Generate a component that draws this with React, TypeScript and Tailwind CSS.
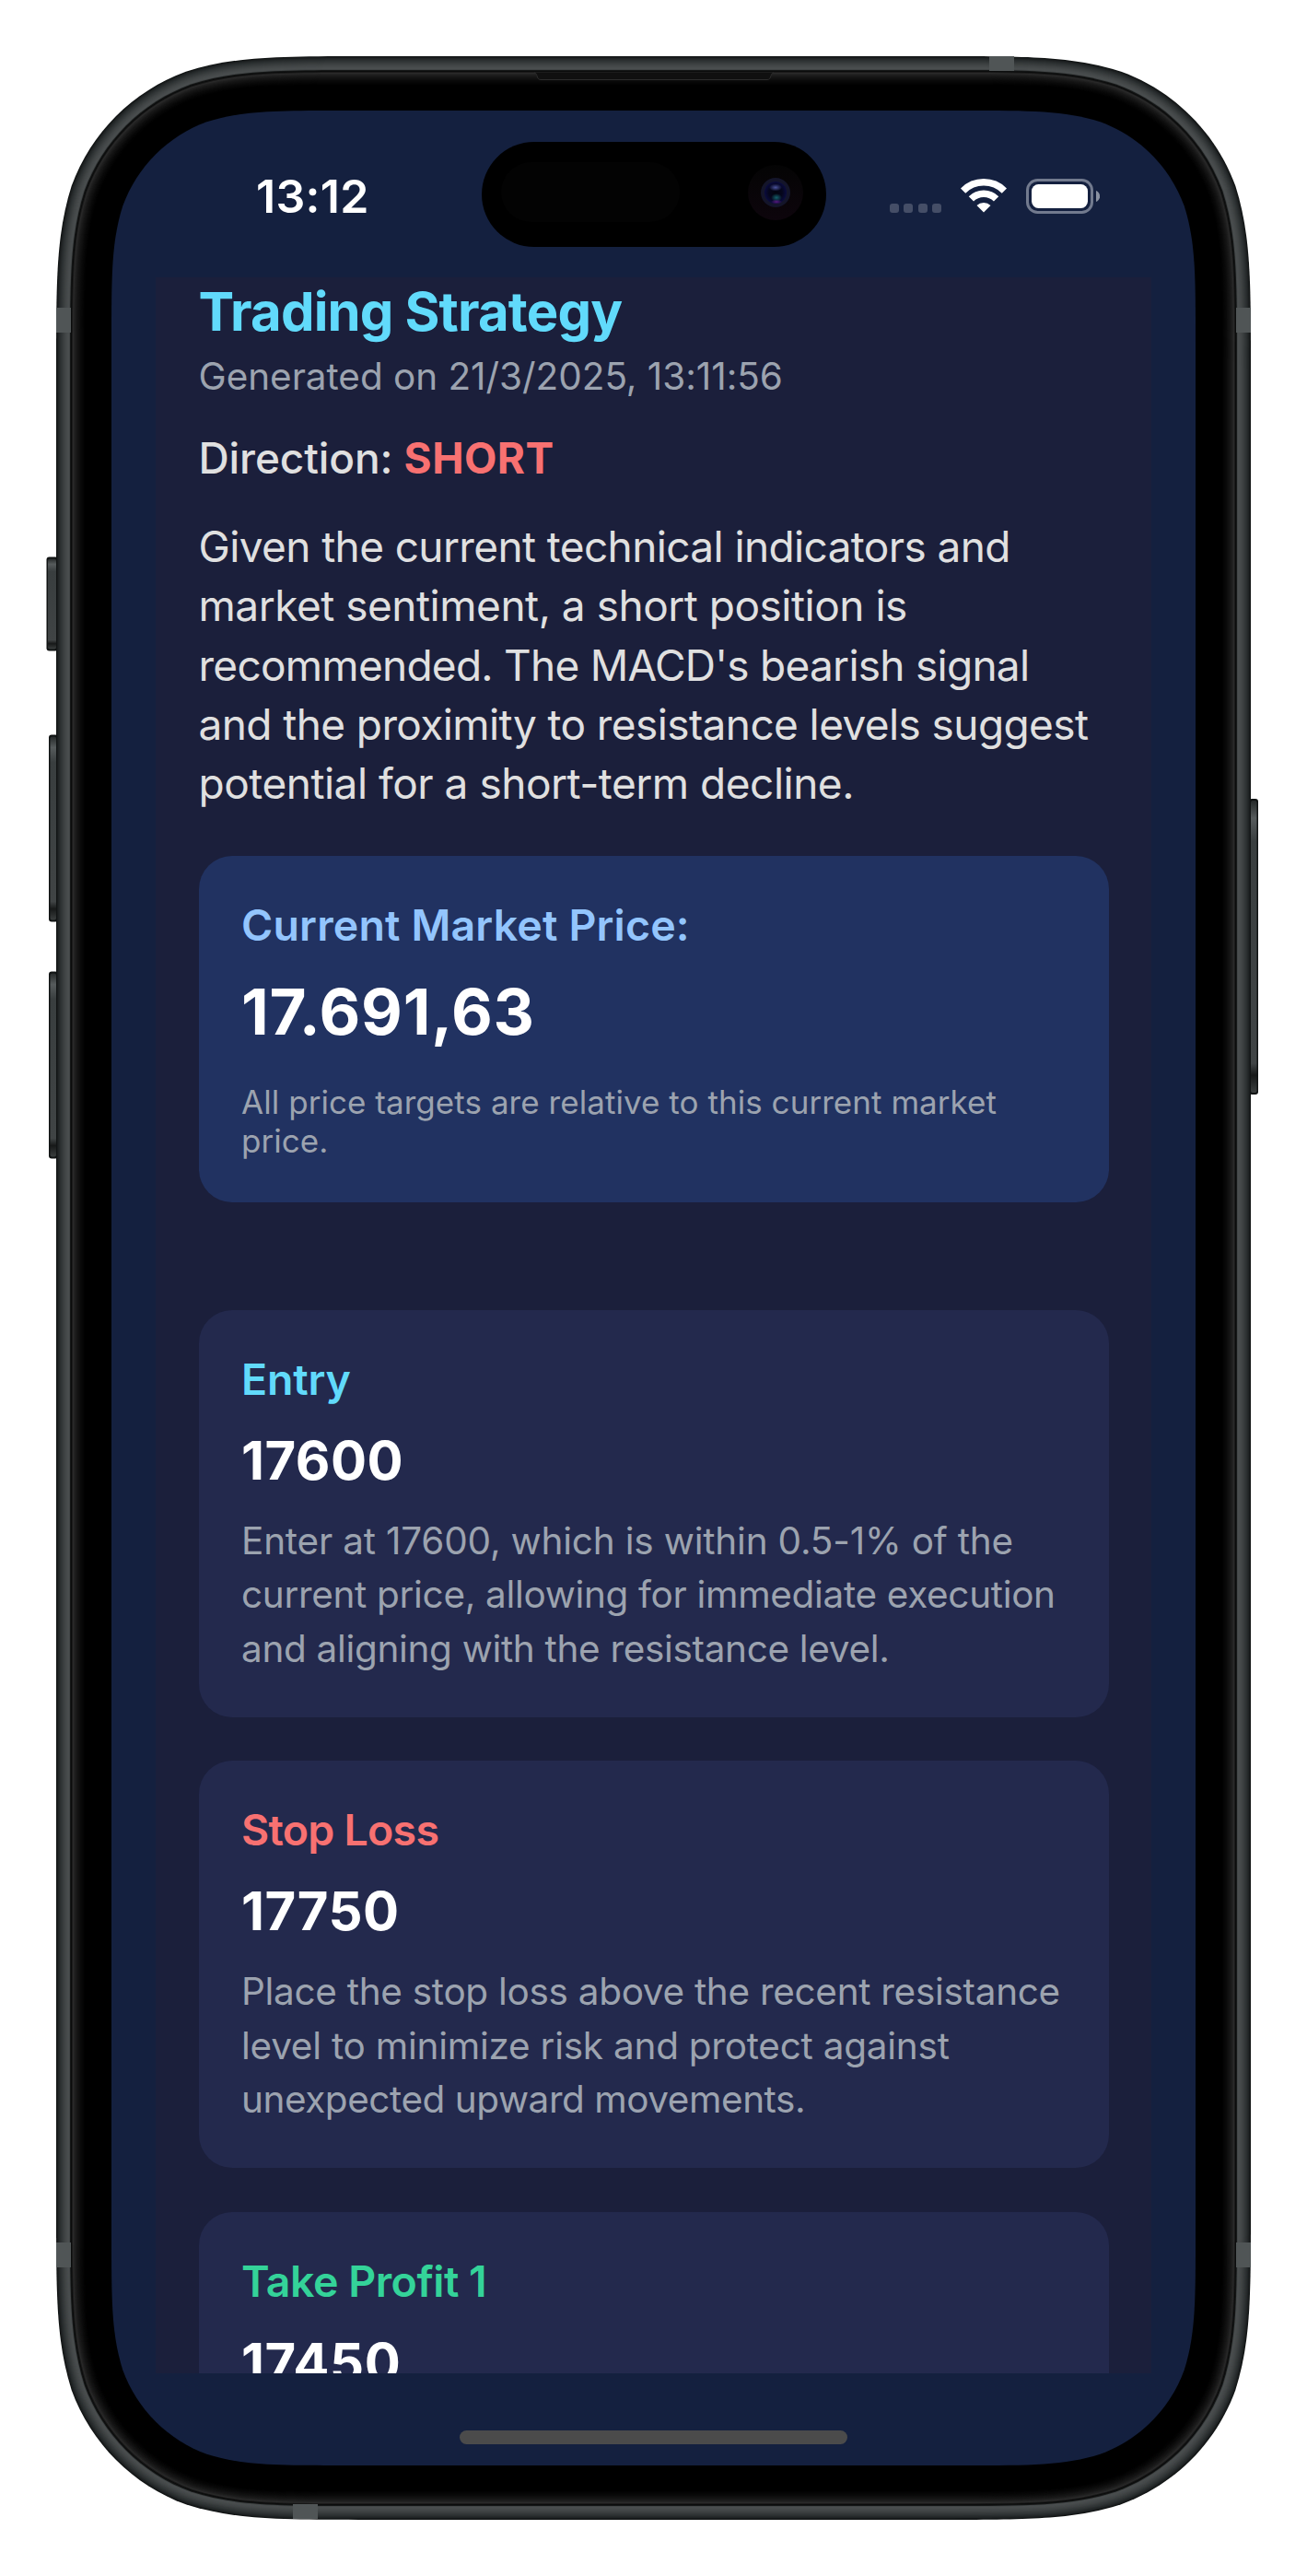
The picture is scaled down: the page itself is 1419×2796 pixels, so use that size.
/** Rounded rectangle with continuous-curvature corners. */
function squircle(x: number, y: number, w: number, h: number, r: number) {
  const a = 1.528665 * r, b = 1.088493 * r, c = 0.868407 * r, d = 0.631494 * r;
  const e = 0.074911 * r, f = 0.372824 * r, g = 0.16906 * r;
  const R = x + w, B = y + h;
  return [
    `M${x + a} ${y}L${R - a} ${y}`,
    `C${R - b} ${y} ${R - c} ${y} ${R - d} ${y + e}`,
    `C${R - f} ${y + g} ${R - g} ${y + f} ${R - e} ${y + d}`,
    `C${R} ${y + c} ${R} ${y + b} ${R} ${y + a}`,
    `L${R} ${B - a}`,
    `C${R} ${B - b} ${R} ${B - c} ${R - e} ${B - d}`,
    `C${R - g} ${B - f} ${R - f} ${B - g} ${R - d} ${B - e}`,
    `C${R - c} ${B} ${R - b} ${B} ${R - a} ${B}`,
    `L${x + a} ${B}`,
    `C${x + b} ${B} ${x + c} ${B} ${x + d} ${B - e}`,
    `C${x + f} ${B - g} ${x + g} ${B - f} ${x + e} ${B - d}`,
    `C${x} ${B - c} ${x} ${B - b} ${x} ${B - a}`,
    `L${x} ${y + a}`,
    `C${x} ${y + b} ${x} ${y + c} ${x + e} ${y + d}`,
    `C${x + g} ${y + f} ${x + f} ${y + g} ${x + d} ${y + e}`,
    `C${x + c} ${y} ${x + b} ${y} ${x + a} ${y}Z`,
  ].join("");
}

/** Colours of the metal rim and bezel, one per pixel from the outside in. */
const RIM = [
  "#111414", "#1a1d1e", "#202425", "#262a2b", "#2b2f30", "#2f3435", "#343839", "#383c3d",
  "#3c4041", "#404445", "#434748", "#464a4b", "#484c4d", "#4a4e4f", "#424647", "#151717",
  "#0b0c0c", "#1b1b1b", "#2a2a2a", "#232323", "#1e1e1e", "#1a1a1a", "#161616", "#131313",
  "#101010", "#0d0d0d", "#0a0a0a", "#080808", "#060606", "#040404", "#020202", "#000000",
];

type ButtonProps = { x: number; y: number; w: number; h: number; flip?: boolean };

function SideButton({ x, y, w, h, flip }: ButtonProps) {
  return (
    <g>
      <rect x={x} y={y} width={w + 2} height={h} rx="3" fill="#101313" />
      <rect x={flip ? x + 2 : x + 1.5} y={y + 2} width={w - 1.5} height={h - 4} rx="2" fill="url(#key)" />
    </g>
  );
}

function Device() {
  return (
    <svg className="absolute inset-0" width="1419" height="2796" viewBox="0 0 1419 2796" fill="none" aria-hidden="true">
      <defs>
        <linearGradient id="key" x1="0" y1="0" x2="0" y2="1">
          <stop offset="0" stopColor="#262a2a" />
          <stop offset="0.06" stopColor="#565b5c" />
          <stop offset="0.14" stopColor="#393e3f" />
          <stop offset="0.9" stopColor="#404445" />
          <stop offset="0.94" stopColor="#171919" />
          <stop offset="1" stopColor="#3a3e3e" />
        </linearGradient>
        <radialGradient id="lens">
          <stop offset="0" stopColor="#03040f" />
          <stop offset="0.6" stopColor="#05061c" />
          <stop offset="1" stopColor="#0a0b3e" />
        </radialGradient>
        <linearGradient id="ring" x1="0" y1="0" x2="0" y2="1">
          <stop offset="0" stopColor="#040404" />
          <stop offset="1" stopColor="#0d050c" />
        </linearGradient>
        <radialGradient id="glintTop">
          <stop offset="0" stopColor="#4a529c" />
          <stop offset="1" stopColor="#4a529c" stopOpacity="0" />
        </radialGradient>
        <radialGradient id="glintMid">
          <stop offset="0" stopColor="#14606a" />
          <stop offset="1" stopColor="#14606a" stopOpacity="0" />
        </radialGradient>
        <radialGradient id="glintLow">
          <stop offset="0" stopColor="#5a1a80" />
          <stop offset="1" stopColor="#5a1a80" stopOpacity="0" />
        </radialGradient>
      </defs>
      <SideButton x={50.5} y={604.5} w={10.5} h={102} />
      <SideButton x={53} y={797.5} w={8} h={203} />
      <SideButton x={53} y={1054.5} w={8} h={203} />
      <SideButton x={1356} y={867} w={8} h={321} flip />
      {RIM.map((color, i) => (
        <path key={i} d={squircle(61 + i, 61 + i, 1297 - 2 * i, 2674 - 2 * i, 223 - i)} fill={color} />
      ))}
      <g fill="#505556">
        <rect x="61" y="334" width="16" height="27" />
        <rect x="1342" y="334" width="16" height="27" />
        <rect x="61" y="2434" width="16" height="27" />
        <rect x="1342" y="2434" width="16" height="27" />
        <rect x="1074" y="61" width="27" height="16" />
        <rect x="318" y="2718" width="27" height="16" />
      </g>
      <path d="M580 79C584 79 582 86.5 587 86.5H833C838 86.5 836 79 840 79" fill="#101010" stroke="#2c2c2c" />
      <path d={squircle(121, 120, 1177, 2556, 164)} fill="#14203f" />
      <rect x="523" y="154" width="374" height="114" rx="57" fill="#000" />
      <rect x="544" y="176" width="194" height="65" rx="32.5" fill="#030303" />
      <circle cx="842" cy="209" r="30" fill="url(#ring)" />
      <circle cx="842" cy="209" r="16" fill="#14152a" />
      <circle cx="842" cy="209" r="12" fill="url(#lens)" />
      <ellipse cx="842" cy="203.500" rx="7" ry="4" fill="url(#glintTop)" />
      <ellipse cx="843" cy="214.500" rx="6" ry="4.500" fill="url(#glintMid)" />
      <ellipse cx="843" cy="219" rx="6" ry="2.500" fill="url(#glintLow)" />
      <rect x="499" y="2638" width="421" height="15" rx="7.5" fill="#4b4b4b" />
    </svg>
  );
}

function StatusBar() {
  return (
    <div className="flex h-[181px] shrink-0 items-start pr-[105px] pl-[158px]">
      <span className="mt-[63px] flex-1 text-[50px] leading-[60px] font-semibold tracking-[0.3px] text-white">13:12</span>
      <div className="mt-[74px] flex h-[38px] items-end">
        <div className="mb-px flex gap-[5.5px]">
          {[0, 1, 2, 3].map((i) => (
            <span key={i} className="size-[10px] rounded-[3px] bg-[#454e67]" />
          ))}
        </div>
        <svg className="mb-px ml-[21px]" width="50" height="37" viewBox="0 0 50 37" fill="none">
          <path d="M2.6 13.1A31.7 31.7 0 0 1 47.4 13.1" stroke="#fff" strokeWidth="7.5" />
          <path d="M11.4 21.9A19.2 19.2 0 0 1 38.6 21.9" stroke="#fff" strokeWidth="7.5" />
          <path d="M17.5 29A10.8 10.8 0 0 1 32.5 29L25 36.5Z" fill="#fff" />
        </svg>
        <svg className="ml-[21px]" width="80" height="38" viewBox="0 0 80 38" fill="none">
          <rect x="1.5" y="1.5" width="70" height="35" rx="11" stroke="#727a8e" strokeWidth="3" />
          <rect x="6" y="6" width="61" height="26" rx="7.5" fill="#fff" />
          <path d="M76 13C81.5 15 81.5 23 76 25Z" fill="#8a91a1" />
        </svg>
      </div>
    </div>
  );
}

type TargetProps = { title: string; titleClass: string; price: string; lines: { text: string; className: string }[] };

function Target({ title, titleClass, price, lines }: TargetProps) {
  return (
    <section className="h-[442px] shrink-0 rounded-[36px] bg-[#23294d] px-[46.5px] pt-[46px]">
      <h2 className={`text-[46.5px] leading-[58px] font-semibold ${titleClass}`}>{title}</h2>
      <p className="mt-[23px] text-[58px] leading-[72px] font-bold tracking-[0.5px] text-white">{price}</p>
      <div className="mt-[23px] text-[40.5px] leading-[58.5px] text-[#9ca3af]">
        {lines.map((line) => (
          <p key={line.text} className={line.className}>{line.text}</p>
        ))}
      </div>
    </section>
  );
}

export default function App() {
  return (
    <div className="relative h-[2796px] w-[1419px] overflow-hidden bg-white font-['Inter',sans-serif]">
      <Device />
      <main className="relative mx-auto flex h-[2576px] w-[1179px] flex-col pt-[120px]">
        <StatusBar />
        <div className="mx-[49px] flex min-h-0 flex-1 flex-col overflow-hidden bg-[#1b1f3b] px-[46.5px] pt-px whitespace-nowrap text-[#e0e0e0]">
          <h1 className="shrink-0 text-[58px] leading-[72px] font-bold tracking-[-0.84px] text-[#61dafb]">Trading Strategy</h1>
          <p className="mt-[10px] shrink-0 text-[40.5px] leading-[50px] tracking-[-0.05px] text-[#9ca3af]">
            Generated on 21/3/2025, 13:11:56
          </p>
          <p className="mt-[34px] shrink-0 text-[46px] leading-[58px] font-medium">
            <span className="tracking-[-0.1px]">Direction: </span>
            <span className="font-bold tracking-[0.45px] text-[#f87171]">SHORT</span>
          </p>
          <div className="mt-[35px] shrink-0 text-[46px] leading-[64.35px]">
            <p className="tracking-[-0.62px]">Given the current technical indicators and</p>
            <p className="tracking-[-0.49px]">market sentiment, a short position is</p>
            <p className="tracking-[-0.74px]">recommended. The MACD's bearish signal</p>
            <p className="tracking-[-0.6px]">and the proximity to resistance levels suggest</p>
            <p className="tracking-[-0.49px]">potential for a short-term decline.</p>
          </div>
          <section className="mt-[46px] h-[376px] shrink-0 rounded-[36px] bg-[#213261] px-[46.5px] pt-[46px]">
            <h2 className="text-[46.5px] leading-[58px] font-semibold tracking-[0.16px] text-[#93c5fd]">Current Market Price:</h2>
            <p className="mt-[22px] text-[69px] leading-[86px] font-bold tracking-[0.75px] text-white">17.691,63</p>
            <p className="mt-[34px] text-[35px] leading-[42px] tracking-[0.05px] whitespace-normal text-[#9ca3af]">
              All price targets are relative to this current market price.
            </p>
          </section>
          <div className="mt-[117px] flex shrink-0 flex-col gap-[47.5px]">
            <Target
              title="Entry"
              titleClass="tracking-[-0.2px] text-[#61dafb]"
              price="17600"
              lines={[
                { text: "Enter at 17600, which is within 0.5-1% of the", className: "tracking-[-0.2px]" },
                { text: "current price, allowing for immediate execution", className: "tracking-[-0.33px]" },
                { text: "and aligning with the resistance level.", className: "tracking-[-0.33px]" },
              ]}
            />
            <Target
              title="Stop Loss"
              titleClass="tracking-[-0.75px] text-[#f87171]"
              price="17750"
              lines={[
                { text: "Place the stop loss above the recent resistance", className: "tracking-[-0.3px]" },
                { text: "level to minimize risk and protect against", className: "tracking-[-0.25px]" },
                { text: "unexpected upward movements.", className: "tracking-[-0.46px]" },
              ]}
            />
            <Target title="Take Profit 1" titleClass="tracking-[-0.5px] text-[#34d399]" price="17450" lines={[]} />
          </div>
        </div>
      </main>
    </div>
  );
}
